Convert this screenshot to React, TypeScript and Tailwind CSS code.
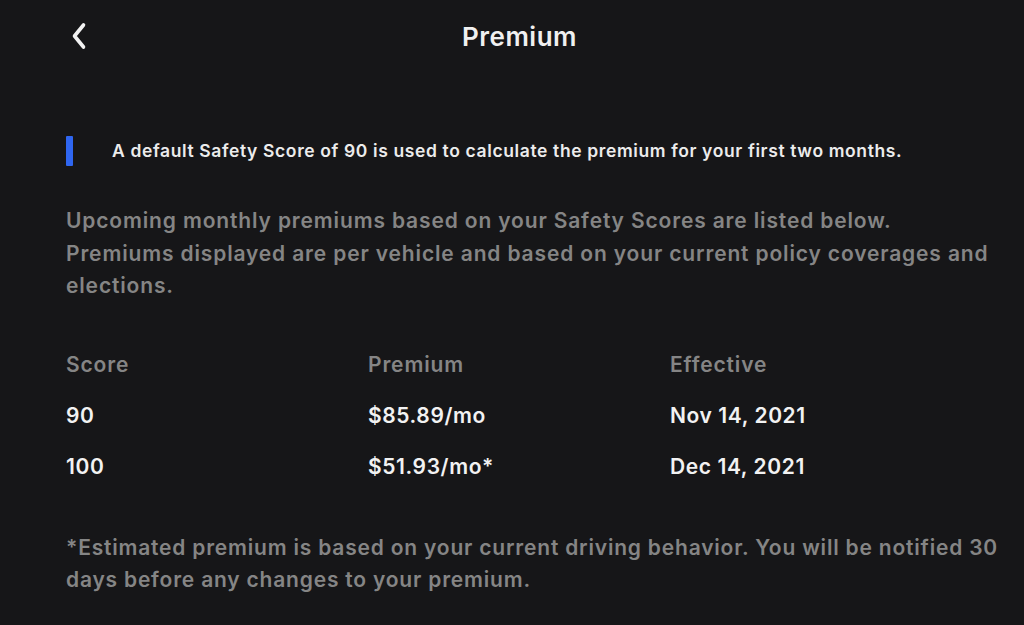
import React from "react";

const rows = [
  { score: "90", premium: "$85.89/mo", effective: "Nov 14, 2021" },
  { score: "100", premium: "$51.93/mo*", effective: "Dec 14, 2021" },
];

export default function App() {
  return (
    <div
      className="w-[1024px] h-[625px] overflow-hidden bg-[#161618] text-white"
      style={{ fontFamily: "Inter, 'Noto Sans', sans-serif" }}
    >
      {/* Header */}
      <header className="relative h-[72px] flex items-center justify-center pl-[15px]">
        <button className="absolute left-[68px] top-[22px] w-[22px] h-[28px] flex items-center justify-center">
          <svg width="18" height="28" viewBox="0 0 18 28" fill="none">
            <path d="M13.5 3 L4.5 14 L13.5 25" stroke="#f2f2f2" strokeWidth="3.6" strokeLinecap="round" strokeLinejoin="round" />
          </svg>
        </button>
        <h1 className="text-[26px] font-semibold tracking-[0.5px] text-[#f0f0f0]">Premium</h1>
      </header>

      <main className="pl-[66px] pr-[12px]">
        {/* Notice */}
        <div className="mt-[64px] flex items-center gap-[39px]">
          <div className="w-[7px] h-[30px] rounded-[1px] bg-[#2f66f0]" />
          <p className="text-[17.5px] font-semibold tracking-[0.62px] text-[#ececec]">
            A default Safety Score of 90 is used to calculate the premium for your first two months.
          </p>
        </div>

        {/* Intro */}
        <p className="mt-[39px] mr-[12px] text-[21px] leading-[32.5px] font-semibold tracking-[0.85px] text-[#858585]">
          Upcoming monthly premiums based on your Safety Scores are listed below. Premiums displayed are per vehicle and based on your current policy coverages and elections.
        </p>

        {/* Table */}
        <div className="mt-[42px] w-[906px]">
          <div className="grid grid-cols-3 h-[40px] items-center text-[21px] font-semibold tracking-[0.85px] text-[#858585]">
            <span>Score</span>
            <span>Premium</span>
            <span>Effective</span>
          </div>
          {rows.map((r) => (
            <div key={r.score} className="grid grid-cols-3 mt-[11px] h-[40px] items-center text-[21px] font-semibold tracking-[0.6px] text-[#f2f2f2]">
              <span>{r.score}</span>
              <span>{r.premium}</span>
              <span>{r.effective}</span>
            </div>
          ))}
        </div>

        {/* Footnote */}
        <p className="mt-[45px] text-[21px] leading-[32.5px] font-semibold tracking-[0.8px] text-[#858585]">
          *Estimated premium is based on your current driving behavior. You will be notified 30 days before any changes to your premium.
        </p>
      </main>
    </div>
  );
}
